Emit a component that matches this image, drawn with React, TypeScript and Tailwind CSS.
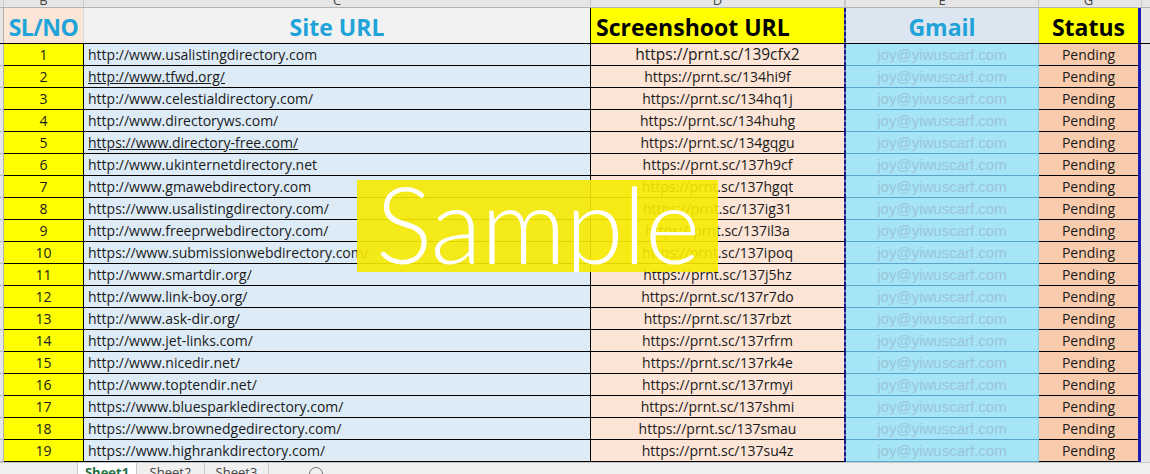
import React from 'react'

const rows: [string, string, boolean?][] = [
  ['http://www.usalistingdirectory.com', 'https://prnt.sc/139cfx2'],
  ['http://www.tfwd.org/', 'https://prnt.sc/134hi9f', true],
  ['http://www.celestialdirectory.com/', 'https://prnt.sc/134hq1j'],
  ['http://www.directoryws.com/', 'https://prnt.sc/134huhg'],
  ['https://www.directory-free.com/', 'https://prnt.sc/134gqgu', true],
  ['http://www.ukinternetdirectory.net', 'https://prnt.sc/137h9cf'],
  ['http://www.gmawebdirectory.com', 'https://prnt.sc/137hgqt'],
  ['https://www.usalistingdirectory.com/', 'https://prnt.sc/137ig31'],
  ['http://www.freeprwebdirectory.com/', 'https://prnt.sc/137il3a'],
  ['https://www.submissionwebdirectory.com/', 'https://prnt.sc/137ipoq'],
  ['http://www.smartdir.org/', 'https://prnt.sc/137j5hz'],
  ['http://www.link-boy.org/', 'https://prnt.sc/137r7do'],
  ['http://www.ask-dir.org/', 'https://prnt.sc/137rbzt'],
  ['http://www.jet-links.com/', 'https://prnt.sc/137rfrm'],
  ['http://www.nicedir.net/', 'https://prnt.sc/137rk4e'],
  ['http://www.toptendir.net/', 'https://prnt.sc/137rmyi'],
  ['https://www.bluesparkledirectory.com/', 'https://prnt.sc/137shmi'],
  ['https://www.brownedgedirectory.com/', 'https://prnt.sc/137smau'],
  ['https://www.highrankdirectory.com/', 'https://prnt.sc/137su4z'],
]

// row header | SL/NO | Site URL | Screenshoot | dashed line | Gmail | Status | blue edge | gray
const cols = 'grid grid-cols-[4px_80px_507px_253px_2px_193px_99px_3px_1fr]'
const dashed = 'bg-[repeating-linear-gradient(to_bottom,#1a1a8c_0_4px,#6b6bb8_4px_6px)]'

export default function App() {
  return (
    <div className="relative w-[1150px] h-[474px] overflow-hidden bg-white font-['Open_Sans',sans-serif] text-[#1a1a1a]">
      {/* column letters */}
      <div className={`${cols} h-[8px] bg-[#e6e6e6] border-b border-[#b4b4b4] text-[13px] text-[#444] leading-none overflow-hidden`}>
        <div className="border-r border-[#c8c8c8]" />
        <div className="border-r border-[#c8c8c8] flex justify-center"><span className="-mt-[6px]">B</span></div>
        <div className="border-r border-[#c8c8c8] flex justify-center"><span className="-mt-[6px]">C</span></div>
        <div className="flex justify-center"><span className="-mt-[6px]">D</span></div>
        <div className="bg-[#c8c8c8]" />
        <div className="border-r border-[#c8c8c8] flex justify-center"><span className="-mt-[6px]">E</span></div>
        <div className="flex justify-center"><span className="-mt-[6px]">G</span></div>
        <div />
        <div className="border-l border-[#c8c8c8]" />
      </div>

      {/* header row */}
      <div className={`${cols} h-[36px] font-bold text-[23px] leading-none border-b border-black`}>
        <div className="bg-[#e6e6e6] border-r border-[#b4b4b4]" />
        <div className="bg-[#fbe5d6] flex items-end pb-[4px] justify-center text-[#20a3d8] border-r border-[#d9d9d9] tracking-[-0.5px]">SL/NO</div>
        <div className="bg-[#f2f2f2] flex items-end pb-[4px] justify-center text-[#20a3d8] border-r border-black">Site URL</div>
        <div className="bg-[#ffff00] flex items-end pb-[4px] pl-[5px] text-black">Screenshoot URL</div>
        <div className={dashed} />
        <div className="bg-[#dce6f1] flex items-end pb-[4px] justify-center text-[#20a3d8] border-r border-[#c0c0c0]">Gmail</div>
        <div className="bg-[#ffff00] flex items-end pb-[4px] justify-center text-black">Status</div>
        <div className="bg-[#1c1cb0]" />
        <div className="bg-[#e6e6e6]" />
      </div>

      {/* data rows */}
      {rows.map(([site, shot, underline], i) => (
        <div key={i} className={`${cols} h-[22px] text-[14px] leading-none`}>
          <div className="bg-[#e6e6e6] border-r border-b border-[#b4b4b4]" />
          <div className="bg-[#ffff00] flex items-center justify-center border-r border-b border-black">{i + 1}</div>
          <div className="bg-[#ddebf7] flex items-center pl-[4px] border-r border-b border-black">
            <span className={underline ? 'underline' : ''}>{site}</span>
          </div>
          <div className={`bg-[#fce4d6] flex items-center justify-center border-b border-black ${i === 0 ? 'text-[15.5px]' : ''}`}>{shot}</div>
          <div className={dashed} />
          <div className="bg-[#a6e5f8] flex items-center justify-center border-r border-[#8ccbe0] border-b border-b-[#5ba7c9] font-['Liberation_Sans',sans-serif] text-[15px] text-[#9cc4d6]">joy@yiwuscarf.com</div>
          <div className="bg-[#f8cbad] flex items-center justify-center border-b border-black">Pending</div>
          <div className="bg-[#1c1cb0]" />
          <div className="bg-[#e6e6e6]" />
        </div>
      ))}

      {/* sheet tabs */}
      <div className="flex h-[12px] bg-[#f0f0f0] border-t border-[#c6c6c6] text-[13px] leading-none overflow-hidden text-[#444]">
        <div className="w-[77px]" />
        <div className="w-[60px] bg-white flex justify-center font-bold text-[#1e7145] border-x border-[#c6c6c6]"><span className="mt-[3px]">Sheet1</span></div>
        <div className="w-[68px] flex justify-center border-r border-[#c6c6c6]"><span className="mt-[3px]">Sheet2</span></div>
        <div className="w-[64px] flex justify-center border-r border-[#c6c6c6]"><span className="mt-[3px]">Sheet3</span></div>
        <div className="w-[40px]" />
        <div className="mt-[4px] w-[14px] h-[14px] rounded-full border border-[#777]" />
      </div>

      {/* watermark */}
      <div className="absolute left-[357px] top-[180px] w-[361px] h-[92px] bg-[#f7ea00]/90 flex justify-center overflow-hidden">
        <span className="font-['Lato',sans-serif] font-light text-white text-[106px] leading-none mt-[-10px] tracking-[-1px]">Sample</span>
      </div>
    </div>
  )
}
